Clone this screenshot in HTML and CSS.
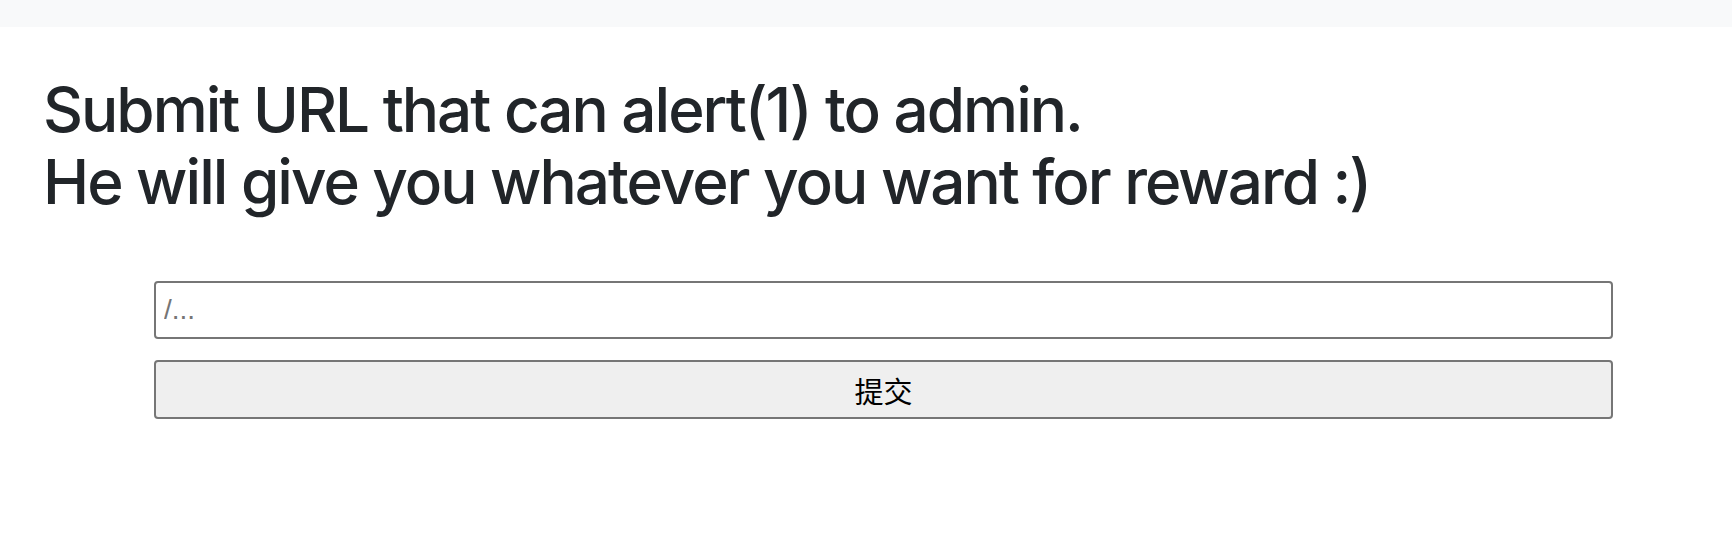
FILE: index.html
```html
<!DOCTYPE html>
<html lang="en">
<head>
<meta charset="utf-8">
<title>Submit URL</title>
<link rel="stylesheet" href="styles.css">
</head>
<body>
<nav class="topbar"></nav>
<main class="container">
  <h1 class="title">Submit URL that can alert(1) to admin.<br>He will give you whatever you want for reward :)</h1>
  <form class="submit-form">
    <input class="url-input" type="text" placeholder="/...">
    <button class="submit-btn" type="button">提交</button>
  </form>
</main>
</body>
</html>
```

FILE: styles.css
```css
html, body {
  margin: 0;
  padding: 0;
  background: #ffffff;
}

body {
  font-family: Inter, "Noto Sans", "Liberation Sans", sans-serif;
  color: #212529;
}

.topbar {
  height: 27px;
  background: #f8f9fa;
}

.container {
  padding: 0 119px 0 43px;
}

.title {
  margin: 47px 0 0 0;
  font-size: 62px;
  font-weight: 500;
  line-height: 72px;
  letter-spacing: -2px;
  color: #212529;
}

.submit-form {
  display: flex;
  flex-direction: column;
  gap: 21px;
  margin: 63px 0 0 111px;
}

.url-input {
  box-sizing: border-box;
  height: 58px;
  width: 100%;
  margin: 0;
  padding: 0 8px;
  border: 2px solid #767676;
  border-radius: 4px;
  background: #ffffff;
  font-family: "Liberation Sans", "Noto Sans CJK SC", sans-serif;
  font-size: 28px;
  color: #000;
  outline: none;
}

.url-input::placeholder {
  color: #757575;
}

.submit-btn {
  box-sizing: border-box;
  height: 59px;
  width: 100%;
  margin: 0;
  border: 2px solid #767676;
  border-radius: 4px;
  background: #efefef;
  font-family: "Noto Sans CJK SC", sans-serif;
  font-size: 29px;
  color: #000;
}
```
